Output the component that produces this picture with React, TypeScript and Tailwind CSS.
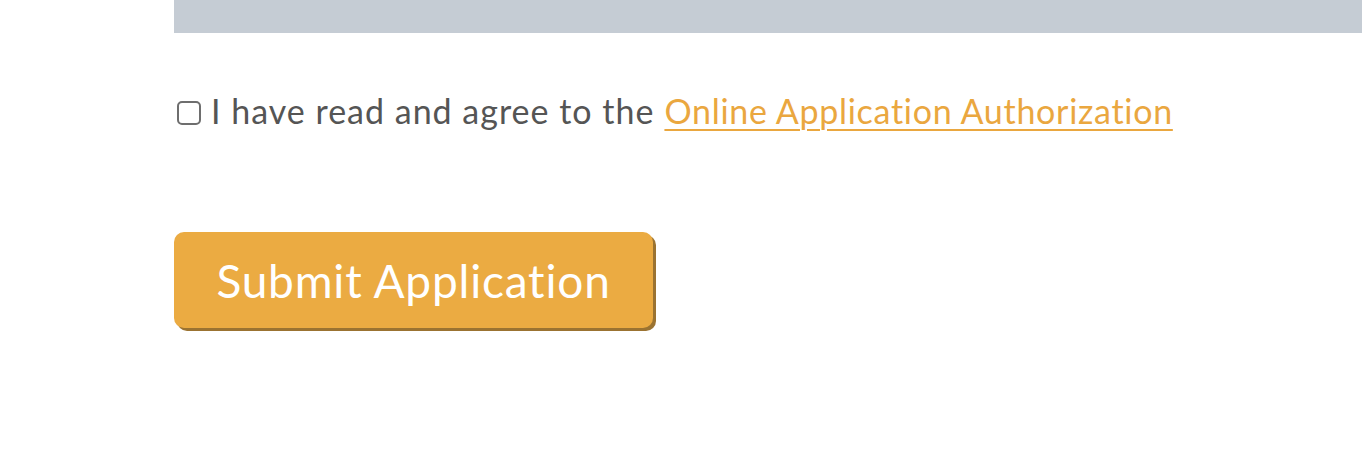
export default function App() {
  return (
    <div
      className="min-h-[452px] bg-white pl-[174px] [font-variant-ligatures:none]"
      style={{ fontFamily: 'Lato, "Open Sans", sans-serif' }}
    >
      <div className="h-[33px] bg-[#c5ccd4]" />

      <label className="mt-[59px] flex h-[36px] items-center text-[34px] text-[#555555]">
        <span className="ml-[3px] mr-[10px] mt-[6px] h-[24px] w-[24px] shrink-0 rounded-[5px] border-2 border-[#6e6e6e] bg-white" />
        <span className="tracking-[1px]">I have read and agree to the</span>
        <a href="#" className="ml-[10px] tracking-[0.7px] text-[#eaa73f] underline decoration-2 underline-offset-[5px]">
          Online Application Authorization
        </a>
      </label>

      <button className="mt-[104px] flex h-[96px] w-[479px] items-center justify-center rounded-[10px] bg-[#ebab42] text-[46px] tracking-[0.8px] text-white shadow-[3px_3px_0_#9b7331]">
        Submit Application
      </button>
    </div>
  );
}
